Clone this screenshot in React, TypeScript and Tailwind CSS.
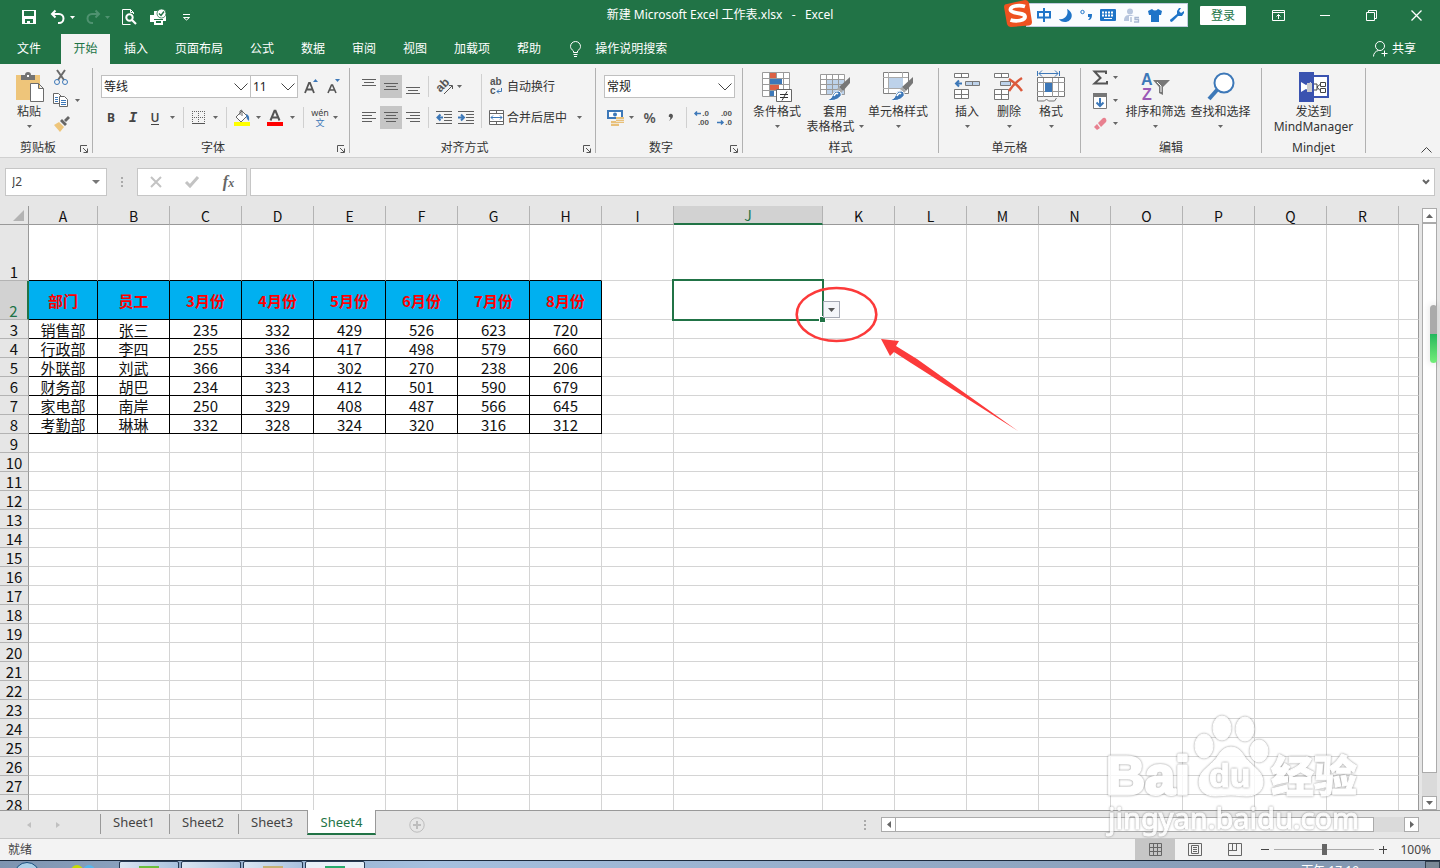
import React from "react";

const columns = [
  { name: "A", width: "w-[69px]" },
  ...["B", "C", "D", "E", "F", "G", "H", "I"].map((name) => ({ name, width: "w-[72px]" })),
  { name: "J", width: "w-[149px]" },
  ...["K", "L", "M", "N", "O", "P", "Q", "R"].map((name) => ({ name, width: "w-[72px]" })),
  { name: "", width: "" },
];

const sheetRows: string[][] = [
  [],
  ["部门", "员工", "3月份", "4月份", "5月份", "6月份", "7月份", "8月份"],
  ["销售部", "张三", "235", "332", "429", "526", "623", "720"],
  ["行政部", "李四", "255", "336", "417", "498", "579", "660"],
  ["外联部", "刘武", "366", "334", "302", "270", "238", "206"],
  ["财务部", "胡巴", "234", "323", "412", "501", "590", "679"],
  ["家电部", "南岸", "250", "329", "408", "487", "566", "645"],
  ["考勤部", "琳琳", "332", "328", "324", "320", "316", "312"],
];

const rowNumbers = Array.from({ length: 28 }, (_, i) => i + 1);

type IconProps = { children: React.ReactNode; w?: number; h?: number; className?: string };

function Svg({ children, w = 16, h = 16, className }: IconProps) {
  return (
    <svg
      width={w}
      height={h}
      viewBox={`0 0 ${w} ${h}`}
      fill="none"
      className={`shrink-0 overflow-visible ${className ?? ""}`}
      aria-hidden="true"
    >
      {children}
    </svg>
  );
}

function Caret({ className = "text-[#666]" }: { className?: string }) {
  return (
    <Svg w={5} h={3} className={className}>
      <path d="M0 0h5L2.5 3z" fill="currentColor" />
    </Svg>
  );
}

function CaretButton({ label, className }: { label: string; className: string }) {
  return (
    <button aria-label={label} className={`flex h-[23px] shrink-0 items-center justify-center ${className}`}>
      <Caret />
    </button>
  );
}

function IconButton({
  label,
  className = "w-[22px]",
  children,
}: {
  label: string;
  className?: string;
  children: React.ReactNode;
}) {
  return (
    <button aria-label={label} className={`flex h-[23px] shrink-0 items-center justify-center ${className}`}>
      {children}
    </button>
  );
}

function Separator({ className }: { className: string }) {
  return <span className={`w-px shrink-0 bg-[#d0d0d0] ${className}`} />;
}

function Lines({ rows }: { rows: [number, number, number][] }) {
  return (
    <Svg w={14} h={14}>
      {rows.map(([x, y, w]) => (
        <rect key={y} x={x} y={y} width={w} height={1} fill="#5f5f5f" />
      ))}
    </Svg>
  );
}

function Group({
  title,
  launcher,
  className,
  children,
}: {
  title: string;
  launcher?: boolean;
  className: string;
  children: React.ReactNode;
}) {
  return (
    <section className={`my-1 flex h-[85px] shrink-0 flex-col border-r border-[#b1b1b1] ${className}`}>
      <div className="flex h-[72px] shrink-0">{children}</div>
      <div className="flex h-[13px] items-center leading-4">
        <h2 className="flex-1 pt-[2px] text-center">{title}</h2>
        {launcher && (
          <button aria-label={`${title}设置`} className="ml-1 flex w-3 pt-1">
            <Svg w={8} h={8}>
              <path d="M.5 7V.5H7M3 3l4 4M7.5 3.500v4h-4" stroke="#555" />
            </Svg>
          </button>
        )}
      </div>
    </section>
  );
}

function BigButton({
  icon,
  label,
  second,
  caret = true,
  className,
}: {
  icon: React.ReactNode;
  label: string;
  second?: string;
  caret?: boolean;
  className: string;
}) {
  return (
    <button
      className={`flex shrink-0 flex-col items-center self-start whitespace-nowrap pt-[2px] leading-[15px] ${className}`}
    >
      <span className="flex h-[34px] items-center justify-center">{icon}</span>
      <span>{label}</span>
      <span className="flex h-[15px] items-center justify-center gap-1">
        {second}
        {caret && <Caret />}
      </span>
    </button>
  );
}

function TitleBar() {
  return (
    <header className="grid h-[34px] shrink-0 grid-cols-[1fr_auto_1fr] items-center text-white">
      <div className="flex items-center pl-[22px]">
        <button aria-label="保存">
          <Svg w={14} h={14}>
            <path d="M0 0h14v14H0z" fill="#fff" />
            <path d="M2 1h10v5H2zM3 9h8v4H8v-2H5v2H3z" fill="#217346" />
          </Svg>
        </button>
        <button aria-label="撤消" className="ml-[14px]">
          <Svg w={16} h={16}>
            <path d="M5.500 1.500L2 5l3.500 3.500M2.500 5H9a4.500 4.500 0 0 1 0 9H8" stroke="#fff" strokeWidth="2" />
          </Svg>
        </button>
        <span className="ml-1">
          <Caret className="text-white" />
        </span>
        <button aria-label="恢复" className="ml-[10px] text-[#4f9270]">
          <Svg w={16} h={16}>
            <path d="M10.500 1.500L14 5l-3.500 3.500M13.500 5H7a4.500 4.500 0 0 0 0 9h1" stroke="currentColor" strokeWidth="2" />
          </Svg>
        </button>
        <span className="ml-1">
          <Caret className="text-[#4f9270]" />
        </span>
        <button aria-label="打印预览" className="ml-[12px]">
          <Svg w={15} h={16}>
            <path d="M11.500 5V3.500L8.500.5h-8v15h8M8.500.5v3h3" stroke="#fff" />
            <circle cx="7.500" cy="8.500" r="3.200" stroke="#fff" strokeWidth="2" />
            <path d="M10 11l4 4" stroke="#fff" strokeWidth="2.200" />
          </Svg>
        </button>
        <button aria-label="快速打印" className="ml-[13px]">
          <Svg w={17} h={16}>
            <path d="M0 6h4V2h4v4h8v6h-3v-2H4v3H0zM4 11h9v5H4z" fill="#fff" />
            <path d="M6 12h5v2H6z" fill="#217346" />
            <circle cx="11.500" cy="4.500" r="4.500" fill="#fff" stroke="#217346" strokeWidth=".8" />
            <path d="M9 4.500l2 2 3-4" stroke="#217346" strokeWidth="1.400" />
          </Svg>
        </button>
        <button aria-label="自定义快速访问工具栏" className="ml-[15px]">
          <Svg w={9} h={7}>
            <path d="M1 .5h7M1.500 3.500h6L4.500 6z" stroke="#fff" />
          </Svg>
        </button>
      </div>
      <h1 className="whitespace-pre pb-1">新建 Microsoft Excel 工作表.xlsx   -   Excel</h1>
      <div className="flex items-center justify-end pb-[3px]">
        <button className="h-[19px] w-[46px] rounded-[1px] bg-white leading-[18px] text-[#217346]">登录</button>
        <button aria-label="功能区显示选项" className="ml-[26px]">
          <Svg w={13} h={11}>
            <path d="M.5.5h12v10H.5zM1 2.500h11M6.500 9V4.500M4.500 6.500l2-2 2 2" stroke="#fff" />
          </Svg>
        </button>
        <button aria-label="最小化" className="ml-[35px]">
          <Svg w={10} h={11}>
            <path d="M0 5.500h10" stroke="#fff" />
          </Svg>
        </button>
        <button aria-label="还原" className="ml-[36px]">
          <Svg w={11} h={11}>
            <path d="M.5 2.500h8v8h-8zM2.500 2.500v-2h8v8h-2" stroke="#fff" />
          </Svg>
        </button>
        <button aria-label="关闭" className="ml-[34px] mr-[18px]">
          <Svg w={11} h={11}>
            <path d="M.5.5l10 10M10.500.5l-10 10" stroke="#fff" strokeWidth="1.300" />
          </Svg>
        </button>
      </div>
    </header>
  );
}

function InputMethodBar() {
  return (
    <div className="absolute right-[252px] top-[3px] flex h-[24px] w-[162px] items-center gap-2 border border-[#c0cce0] bg-[#fafcff] pl-[10px] text-[#1f74c8]">
      <div className="absolute -left-[23px] -top-[4px]">
        <Svg w={28} h={28}>
          <path d="M3 4L21 0q3 0 4 3l3 19q0 3-3 3.500L7 27q-3 0-4-3L0 7q0-3 3-3z" fill="#ee5220" />
          <path
            d="M21 6.500C15 4.500 6 6 6.500 10c.5 4 14 2 14.500 6.500.5 4-9 5.500-14.500 3.500"
            stroke="#fff"
            strokeWidth="3.800"
          />
        </Svg>
      </div>
      <Svg w={14} h={14}>
        <path d="M1 4h12v5.500H1zM7 0v14" stroke="currentColor" strokeWidth="2" />
      </Svg>
      <Svg w={13} h={13}>
        <path d="M8 0c8 4 5 13-2 13-3 0-5-1-6-3 6 1 10-4 8-10z" fill="currentColor" />
      </Svg>
      <Svg w={12} h={12}>
        <circle cx="2.500" cy="3" r="1.700" stroke="currentColor" />
        <path d="M8 5h4c0 4-1 6-4 6 1-1 2-2 1.500-3H8z" fill="currentColor" />
      </Svg>
      <Svg w={16} h={12}>
        <rect width="16" height="12" rx="1" fill="currentColor" />
        <path d="M2 3.500h12M2 6.500h12" stroke="#fff" strokeWidth="2" strokeDasharray="2 1" />
        <path d="M4 9.500h8" stroke="#fff" />
      </Svg>
      <Svg w={16} h={15}>
        <circle cx="6" cy="3.500" r="3" fill="#b8c6de" />
        <path d="M0 13c0-5 2-6 6-6s6 2 6 6z" fill="#b8c6de" />
        <path d="M5 8h11v7H5z" fill="#fafcff" />
        <path d="M7 9v5M15 9.500h-4v2h3.500v2.500H10" stroke="#a9b8d3" strokeWidth="1.300" />
      </Svg>
      <Svg w={14} h={13}>
        <path d="M4 0q3 3 6 0l4 2-1 4h-2v7H3V6H1L0 2z" fill="currentColor" />
      </Svg>
      <Svg w={14} h={14}>
        <path d="M9 0L7 3v3l-6 5q-2 1 0 3 1 0 2-1l5-5h4l2-3V3l-3 2-2-2 2-3z" fill="currentColor" />
      </Svg>
    </div>
  );
}

function RibbonTabs() {
  return (
    <nav className="flex h-[30px] shrink-0 items-stretch text-white">
      <button className="w-[61px] pr-[3px] leading-[26px]">文件</button>
      <button className="w-[49px] bg-[#f3f3f3] leading-[26px] text-[#217346]">开始</button>
      {["插入", "页面布局", "公式", "数据", "审阅", "视图", "加载项", "帮助"].map((tab) => (
        <button key={tab} className="ml-px px-[13px] leading-[26px]">
          {tab}
        </button>
      ))}
      <button className="ml-4 flex items-center gap-[14px]">
        <Svg w={11} h={16}>
          <path d="M3.500 11.500V10C1.500 8.500.5 7 .5 5.500a5 5 0 0 1 10 0C10.500 7 9.500 8.500 7.500 10v1.500zM3.500 13.500h4M4 15.500h3" stroke="#fff" />
        </Svg>
        操作说明搜索
      </button>
      <button className="ml-auto mr-6 flex items-center gap-1">
        <Svg w={15} h={16}>
          <circle cx="7" cy="5" r="4.500" stroke="#fff" />
          <path d="M.5 15.500c0-3 2-5.500 5-6M8.500 12.500h6M11.500 9.500v6" stroke="#fff" />
        </Svg>
        共享
      </button>
    </nav>
  );
}

function Combo({ label, value, className }: { label: string; value: string; className: string }) {
  return (
    <div className={`relative h-[23px] shrink-0 ${className}`}>
      <select
        aria-label={label}
        defaultValue={value}
        className="h-full w-full appearance-none border border-[#c0c0c0] bg-white pl-[2px] text-xs text-[#222]"
      >
        <option>{value}</option>
      </select>
      <Svg w={14} h={8} className="pointer-events-none absolute right-[3px] top-2">
        <path d="M.5.5L7 7l6.500-6.500" stroke="#444" />
      </Svg>
    </div>
  );
}

function ClipboardGroup() {
  return (
    <Group title="剪贴板" launcher className="w-[93px]">
      <BigButton
        label="粘贴"
        className="ml-2 w-[42px]"
        icon={
          <Svg w={28} h={30} className="ml-[2px]">
            <path d="M0 3h24v25H0z" fill="#eec57a" />
            <path d="M5 8V3h4q0-3 3-3t3 3h4v5z" fill="#737373" />
            <path d="M11 3h2v2h-2z" fill="#fff" />
            <path d="M14.500 11.500h8l5 5v13h-13zM22.500 11.500v5h5" fill="#fff" stroke="#6c6c6c" />
          </Svg>
        }
      />
      <div className="-mt-[2px] flex flex-col pl-[2px]">
        <IconButton label="剪切" className="w-[18px]">
          <Svg>
            <path d="M4 0l7 10M12 0L5 10" stroke="#6a6a6a" strokeWidth="2" />
            <circle cx="4" cy="12" r="2.500" stroke="#3d78b8" />
            <circle cx="12" cy="12" r="2.500" stroke="#3d78b8" />
          </Svg>
        </IconButton>
        <div className="flex">
          <IconButton label="复制" className="w-[18px]">
            <Svg>
              <path d="M.5.5h5l3 3v7h-8z" fill="#fff" stroke="#666" />
              <path d="M2 4.500h3M2 6.500h3M2 8.500h3" stroke="#3d78b8" />
              <path d="M6.500 3.500h5l3 3v7h-8z" fill="#fff" stroke="#666" />
              <path d="M8 7.500h5M8 9.500h5M8 11.500h5" stroke="#3d78b8" />
            </Svg>
          </IconButton>
          <CaretButton label="复制选项" className="ml-[2px] w-[10px]" />
        </div>
        <IconButton label="格式刷" className="w-[20px]">
          <Svg>
            <path d="M0 9l5-3 5 5-4 5z" fill="#eec57a" />
            <path d="M6 5l2-2 5 5-2 2zM10 4l4-4 2 2-4 4z" fill="#666" />
          </Svg>
        </IconButton>
      </div>
    </Group>
  );
}

function FontGroup() {
  return (
    <Group title="字体" launcher className="w-[257px]">
      <div className="flex flex-col gap-2 pl-[7px] pt-[7px]">
        <div className="flex items-center pl-px">
          <Combo label="字体" value="等线" className="w-[150px]" />
          <Combo label="字号" value="11" className="-ml-px w-[48px]" />
          <IconButton label="增大字号" className="w-[26px]">
            <Svg w={14} h={16}>
              <path d="M1 14L5 4h1l4 10M2.500 10.500h6" stroke="#555" strokeWidth="1.800" />
              <path d="M9 3h5l-2.500-3z" fill="#3d78b8" />
            </Svg>
          </IconButton>
          <IconButton label="减小字号" className="w-[20px]">
            <Svg w={14} h={16}>
              <path d="M1 14l3.500-8h1L9 14M2.500 11h5" stroke="#555" strokeWidth="1.600" />
              <path d="M8 0h5l-2.500 3z" fill="#3d78b8" />
            </Svg>
          </IconButton>
        </div>
        <div className="flex items-center text-[#444]">
          <IconButton label="加粗">
            <b>B</b>
          </IconButton>
          <IconButton label="倾斜">
            <i className="font-['Liberation_Mono',monospace] text-sm font-bold">I</i>
          </IconButton>
          <IconButton label="下划线">
            <span className="border-b border-[#444] font-semibold leading-[13px]">U</span>
          </IconButton>
          <CaretButton label="下划线选项" className="w-3" />
          <Separator className="mx-[5px] h-[21px]" />
          <IconButton label="边框" className="w-[18px]">
            <Svg w={13} h={13}>
              <path d="M.5 0v12M6.500 0v12M12.500 0v12M0 .5h13M0 6.500h13" stroke="#666" strokeDasharray="1 1" />
              <path d="M0 12.500h13" stroke="#555" />
            </Svg>
          </IconButton>
          <CaretButton label="边框选项" className="w-4" />
          <Separator className="mx-[3px] h-[21px]" />
          <IconButton label="填充颜色" className="w-6">
            <Svg>
              <path d="M2 7l6-6 5 5-6 6z" fill="#fff" stroke="#666" />
              <path d="M6 5V1q2-2 2 0v5" stroke="#666" />
              <path d="M12 4q4 1 3 7-3-2-3-7z" fill="#3d78b8" />
              <path d="M0 12h16v4H0z" fill="#ff0" />
            </Svg>
          </IconButton>
          <CaretButton label="填充颜色选项" className="w-2" />
          <IconButton label="字体颜色" className="w-[26px]">
            <Svg>
              <path d="M3.500 10.500L7.500.8h1l4 9.700M5 7.500h6" stroke="#555" strokeWidth="2" />
              <path d="M0 12h16v4H0z" fill="red" />
            </Svg>
          </IconButton>
          <CaretButton label="字体颜色选项" className="w-2" />
          <Separator className="ml-[7px] mr-[5px] h-[21px]" />
          <button aria-label="拼音指南" className="flex w-[22px] flex-col items-center text-[9px] leading-[10px]">
            <span>wén</span>
            <span className="text-[#3d78b8]">文</span>
          </button>
          <CaretButton label="拼音选项" className="w-2" />
        </div>
      </div>
    </Group>
  );
}

function AlignmentGroup() {
  return (
    <Group title="对齐方式" launcher className="w-[246px]">
      <div className="flex flex-col gap-2 pl-2 pt-[7px]">
        <div className="flex items-center">
          <IconButton label="顶端对齐">
            <Lines rows={[[0, -1, 14], [2, 2, 10], [0, 5, 14]]} />
          </IconButton>
          <IconButton label="垂直居中" className="w-[22px] bg-[#c6c6c6]">
            <Lines rows={[[0, 3, 14], [2, 6, 10], [0, 9, 14]]} />
          </IconButton>
          <IconButton label="底端对齐">
            <Lines rows={[[0, 7, 14], [2, 10, 10], [0, 13, 14]]} />
          </IconButton>
          <Separator className="mx-1 h-[21px]" />
          <IconButton label="方向" className="w-[26px]">
            <Svg w={18} h={18}>
              <text
                x="0"
                y="11"
                transform="rotate(-45 6 9)"
                fontSize="12"
                fontWeight="700"
                fontFamily="Liberation Sans, sans-serif"
                fill="#555"
              >
                ab
              </text>
              <path d="M7 16l8-8M12 7.500h3.500V11" stroke="#555" />
            </Svg>
          </IconButton>
          <CaretButton label="方向选项" className="-ml-1 w-2" />
        </div>
        <div className="flex items-center">
          <IconButton label="左对齐">
            <Lines rows={[[0, 1, 14], [0, 4, 10], [0, 7, 14], [0, 10, 10]]} />
          </IconButton>
          <IconButton label="居中" className="w-[22px] bg-[#c6c6c6]">
            <Lines rows={[[0, 1, 14], [2, 4, 10], [0, 7, 14], [2, 10, 10]]} />
          </IconButton>
          <IconButton label="右对齐">
            <Lines rows={[[0, 1, 14], [4, 4, 10], [0, 7, 14], [4, 10, 10]]} />
          </IconButton>
          <Separator className="mx-1 h-[21px]" />
          <IconButton label="减少缩进量">
            <Svg>
              <path d="M0 1.500h16M8 4.500h8M8 7.500h8M8 10.500h8M0 13.500h16" stroke="#5f5f5f" />
              <path d="M7 7.500H2M4.500 4.500l-3 3 3 3" stroke="#3d78b8" strokeWidth="2" />
            </Svg>
          </IconButton>
          <IconButton label="增加缩进量">
            <Svg>
              <path d="M0 1.500h16M8 4.500h8M8 7.500h8M8 10.500h8M0 13.500h16" stroke="#5f5f5f" />
              <path d="M0 7.500h5M3 4.500l3 3-3 3" stroke="#3d78b8" strokeWidth="2" />
            </Svg>
          </IconButton>
        </div>
      </div>
      <Separator className="ml-[4px] mt-[6px] h-[54px]" />
      <div className="flex flex-col gap-2 pl-[7px] pt-[7px]">
        <button className="flex h-[23px] items-center gap-[3px]">
          <Svg w={15} h={17}>
            <text x="1" y="7" fontSize="10" fontWeight="700" fontFamily="Liberation Sans, sans-serif" fill="#555">
              ab
            </text>
            <text x="1" y="16" fontSize="10" fontWeight="700" fontFamily="Liberation Sans, sans-serif" fill="#555">
              c
            </text>
            <path d="M12.500 10v3.500H8M10 11.500l-2 2 2 2" stroke="#3d78b8" />
          </Svg>
          自动换行
        </button>
        <div className="flex items-center">
          <button className="flex h-[23px] items-center gap-[3px]">
            <Svg w={15} h={15}>
              <path d="M.5.5h14v14H.5zM1 3.500h13M1 11.500h13M7.500 1v3M7.500 11v3" fill="#fff" stroke="#666" />
              <path d="M2 7.500h11M4 5.500l-2 2 2 2M11 5.500l2 2-2 2" stroke="#3d78b8" />
            </Svg>
            合并后居中
          </button>
          <CaretButton label="合并选项" className="ml-2 w-2" />
        </div>
      </div>
    </Group>
  );
}

function NumberGroup() {
  return (
    <Group title="数字" launcher className="w-[147px]">
      <div className="flex flex-col gap-2 pl-2 pt-[7px]">
        <Combo label="数字格式" value="常规" className="w-[131px]" />
        <div className="flex items-center text-[#555]">
          <IconButton label="会计数字格式">
            <Svg w={17} h={16}>
              <path d="M0 0h16v9H0z" fill="#3d78b8" />
              <path d="M2 2h12v5H2z" fill="#fff" />
              <circle cx="8" cy="4.500" r="2" fill="#3d78b8" />
              <path d="M9 7h8v6h-5v3H4v-5h5z" fill="#e8c07a" />
              <path d="M9 9.500h8M4 13.500h8M9 11.500h8" stroke="#f3f3f3" strokeWidth=".7" />
            </Svg>
          </IconButton>
          <CaretButton label="会计格式选项" className="w-[10px]" />
          <IconButton label="百分比样式" className="w-[27px]">
            <span className="text-sm font-semibold">%</span>
          </IconButton>
          <IconButton label="千位分隔样式" className="w-4">
            <Svg w={6} h={10}>
              <path d="M1 2q1-2 3-1 3 3-3 7 2-3 1-4-2 0-1-2z" fill="#555" />
            </Svg>
          </IconButton>
          <Separator className="mx-[7px] h-[21px]" />
          <button
            aria-label="增加小数位数"
            className="relative w-[15px] text-right font-['Liberation_Sans',sans-serif] text-[8px] font-bold leading-[9px]"
          >
            .0
            <br />
            .00
            <Svg w={6} h={5} className="absolute left-0 top-[2px]">
              <path d="M7 2.500H1M3 .5l-2 2 2 2" stroke="#3d78b8" strokeWidth="1.500" />
            </Svg>
          </button>
          <button
            aria-label="减少小数位数"
            className="relative ml-2 w-[15px] text-right font-['Liberation_Sans',sans-serif] text-[8px] font-bold leading-[9px]"
          >
            .00
            <br />
            .0
            <Svg w={6} h={5} className="absolute bottom-[2px] left-0">
              <path d="M0 2.500h6M4 .5l2 2-2 2" stroke="#3d78b8" strokeWidth="1.500" />
            </Svg>
          </button>
        </div>
      </div>
    </Group>
  );
}

function Brush() {
  return (
    <>
      <path d="M30 5v6l-7 8-4-4z" fill="#777" />
      <path d="M19 15l4 4-2 2-4-4z" fill="#aaa" />
      <path d="M7 28q5-1 6-6 2-4 6-3 4 3 1 6-5 5-13 3z" fill="#3d78b8" stroke="#fff" />
      <path d="M14 24q2-4 4-2" stroke="#fff" strokeWidth="1.500" />
    </>
  );
}

function StyleGroup() {
  return (
    <Group title="样式" className="w-[196px]">
      <BigButton
        label="条件格式"
        className="ml-[5px] w-[58px]"
        icon={
          <Svg w={30} h={30}>
            <path d="M.5.500h27v24H.5z" fill="#fff" />
            <path d="M.5.500h27v24H.5zM0 6.500h28M0 12.500h28M0 18.500h28M7.500 0v24M14.500 0v24M21.500 0v24" stroke="#9a9a9a" />
            <path d="M8 1h6v5H8zM8 13h9v5H8z" fill="#dc6044" />
            <path d="M8 7h12v5H8zM8 19h4v5H8z" fill="#3d78b8" />
            <path d="M14.500 17.500h15v12h-15z" fill="#fff" stroke="#666" />
            <path d="M18 22.500h8M18 25.500h8M25 19.500l-5 9" stroke="#333" />
          </Svg>
        }
      />
      <BigButton
        label="套用"
        second="表格格式"
        className="w-[58px]"
        icon={
          <Svg w={30} h={30}>
            <path d="M.5 2.500h24v20H.5z" fill="#fff" />
            <path d="M7 8h18v15H7z" fill="#bdd2ea" />
            <path d="M.5 2.500h24v20H.5zM0 7.500h24M0 12.500h24M0 17.500h24M6.500 2v20M12.500 2v20M18.500 2v20" stroke="#9a9a9a" />
            <Brush />
          </Svg>
        }
      />
      <BigButton
        label="单元格样式"
        className="w-[68px]"
        icon={
          <Svg w={30} h={30}>
            <path d="M.5.500h25v21H.5z" fill="#fff" stroke="#808080" />
            <path d="M0 5.500h25M0 16.500h25M5.500 0v21M19.500 0v21" stroke="#aaa" />
            <path d="M6 6h14v10H6z" fill="#bdd2ea" />
            <Brush />
          </Svg>
        }
      />
    </Group>
  );
}

function CellsGroup() {
  return (
    <Group title="单元格" className="w-[142px]">
      <BigButton
        label="插入"
        className="ml-[7px] w-[42px]"
        icon={
          <Svg w={27} h={30}>
            <path d="M.5 1.500h14v4H.5zM7.500 1v5M.5 17.500h14v9H.5zM0 22.500h15M7.500 17v10" fill="#fff" stroke="#777" />
            <path d="M11.500 9.500h14v4h-14z" fill="#bdd2ea" stroke="#777" />
            <path d="M18.500 9v5" stroke="#777" />
            <path d="M8 11.500H2M5 8.500l-3 3 3 3" stroke="#3d78b8" strokeWidth="2" />
          </Svg>
        }
      />
      <BigButton
        label="删除"
        className="w-[42px]"
        icon={
          <Svg w={30} h={30}>
            <path d="M.5 1.500h14v4H.5zM7.500 1v5M.5 17.500h14v10H.5zM0 22.500h15M7.500 17v11" fill="#fff" stroke="#777" />
            <path d="M6.500 9.500h10v4h-10z" fill="#bdd2ea" stroke="#777" />
            <path d="M15 7q8 5 13 12M28 6Q20 11 15 19" stroke="#dc5a3c" strokeWidth="2.500" />
          </Svg>
        }
      />
      <BigButton
        label="格式"
        className="w-[42px]"
        icon={
          <Svg w={28} h={32}>
            <path d="M.5 0v5M22.500 0v5M2 2.500h19M5-.5l-3 3 3 3M18-.5l3 3-3 3" stroke="#3d78b8" />
            <path d="M.5 6.500h27v19H.5z" fill="#fff" stroke="#777" />
            <path d="M0 11.500h28M0 20.500h28M6.500 7v19M15.500 7v19M21.500 7v19" stroke="#9a9a9a" />
            <path d="M8 12h7v9H8z" fill="#3d78b8" />
            <path d="M.5 26v4h7l2-2 2 2h6l2-3" stroke="#777" />
          </Svg>
        }
      />
    </Group>
  );
}

function EditGroup() {
  return (
    <Group title="编辑" className="w-[181px]">
      <div className="-mt-[2px] flex w-[42px] shrink-0 flex-col pl-[10px]">
        <div className="flex">
          <IconButton label="自动求和" className="w-[18px]">
            <Svg>
              <path d="M14 4V1.500H2.500L8.500 8l-6 5.500H15V11" stroke="#555" strokeWidth="2" />
            </Svg>
          </IconButton>
          <CaretButton label="求和选项" className="w-3" />
        </div>
        <div className="flex">
          <IconButton label="填充" className="w-[18px]">
            <Svg w={14} h={16}>
              <path d="M.5.500h13v15H.5z" fill="#fff" stroke="#777" />
              <path d="M0 0h14v4H0z" fill="#777" />
              <path d="M7 5v8M3.500 9.500L7 13l3.500-3.500" stroke="#3d78b8" strokeWidth="2" />
            </Svg>
          </IconButton>
          <CaretButton label="填充选项" className="w-3" />
        </div>
        <div className="flex">
          <IconButton label="清除" className="w-[18px]">
            <Svg w={14} h={14}>
              <path d="M5 6l5-5q2-1 3 1t0 3L8 10z" fill="#e8808f" />
              <path d="M4 7l3 4-3 2-3-3z" fill="#e8808f" />
            </Svg>
          </IconButton>
          <CaretButton label="清除选项" className="w-3" />
        </div>
      </div>
      <BigButton
        label="排序和筛选"
        className="w-[65px]"
        icon={
          <Svg w={29} h={30}>
            <text x="0" y="13" fontSize="16" fontWeight="700" fontFamily="Liberation Sans, sans-serif" fill="#3d78b8">
              A
            </text>
            <text x="1" y="28" fontSize="16" fontWeight="700" fontFamily="Liberation Sans, sans-serif" fill="#9b59b6">
              Z
            </text>
            <path d="M12 8h17l-7 7v8l-4-2v-6z" fill="#777" />
            <path d="M16 10l4 4v6" stroke="#fff" />
          </Svg>
        }
      />
      <BigButton
        label="查找和选择"
        className="w-[65px]"
        icon={
          <Svg w={28} h={30}>
            <path d="M10 18l-8 9" stroke="#3d78b8" strokeWidth="4" />
            <circle cx="17" cy="11" r="9.500" fill="#fff" stroke="#3d78b8" strokeWidth="2" />
          </Svg>
        }
      />
    </Group>
  );
}

function MindjetGroup() {
  return (
    <Group title="Mindjet" className="w-[104px]">
      <BigButton
        label="发送到"
        second="MindManager"
        caret={false}
        className="w-full"
        icon={
          <Svg w={30} h={30}>
            <path d="M14 4h15v21H14z" fill="#fff" stroke="#3a53b0" strokeWidth="2" />
            <path d="M0 0h15v30H0z" fill="#3a53b0" />
            <path d="M2 10l5 3 5-3v10l-5-3-5 3z" fill="#fff" />
            <path d="M8 11h5v9H8z" fill="#ccc" />
            <path d="M15 12h3v6h-3M21.500 10.500h5v4h-5zM21.500 16.500h5v4h-5zM18 15l3-2.500M18 15l3 3.500" stroke="#444" />
          </Svg>
        }
      />
    </Group>
  );
}

function Ribbon() {
  return (
    <div className="flex h-[94px] shrink-0 border-b border-[#d0d0d0] bg-[#f3f3f3]">
      <ClipboardGroup />
      <FontGroup />
      <AlignmentGroup />
      <NumberGroup />
      <StyleGroup />
      <CellsGroup />
      <EditGroup />
      <MindjetGroup />
      <button aria-label="折叠功能区" className="mb-1 ml-auto mr-2 self-end">
        <Svg w={11} h={6}>
          <path d="M.5 5.500l5-5 5 5" stroke="#444" />
        </Svg>
      </button>
    </div>
  );
}

function Dots() {
  return (
    <Svg w={2} h={10}>
      <path d="M0 0h2v2H0zM0 4h2v2H0zM0 8h2v2H0z" fill="#aaa" />
    </Svg>
  );
}

function FormulaBar() {
  return (
    <div className="flex h-[48px] shrink-0 items-start pl-[5px] pr-[5px] pt-[10px]">
      <div className="flex h-[28px] w-[102px] items-center border border-[#c6c6c6] bg-white">
        <input aria-label="名称框" defaultValue="J2" className="min-w-0 flex-1 pl-[6px] text-[#444]" />
        <button aria-label="名称列表" className="px-[6px]">
          <Svg w={8} h={4}>
            <path d="M0 0h8L4 4z" fill="#777" />
          </Svg>
        </button>
      </div>
      <div className="flex h-[28px] w-[30px] items-center justify-center">
        <Dots />
      </div>
      <div className="flex h-[28px] w-[110px] items-center justify-around border border-[#c6c6c6] bg-white">
        <button aria-label="取消">
          <Svg w={12} h={12}>
            <path d="M1 1l10 10M11 1L1 11" stroke="#c3c3c3" strokeWidth="2" />
          </Svg>
        </button>
        <button aria-label="输入">
          <Svg w={14} h={12}>
            <path d="M1 6l4 4 8-9" stroke="#c3c3c3" strokeWidth="3" />
          </Svg>
        </button>
        <button
          aria-label="插入函数"
          className="font-['Liberation_Serif',serif] text-base font-bold italic leading-5 text-[#666]"
        >
          f<span className="text-xs">x</span>
        </button>
      </div>
      <div className="ml-[3px] flex h-[28px] flex-1 items-center border border-[#c6c6c6] bg-white">
        <input aria-label="编辑栏" className="min-w-0 flex-1 px-2" />
        <button aria-label="展开编辑栏" className="pr-1">
          <Svg w={8} h={6}>
            <path d="M1 1l3 3 3-3" stroke="#666" strokeWidth="2" />
          </Svg>
        </button>
      </div>
    </div>
  );
}

function Selection() {
  return (
    <>
      <span className="absolute -inset-[2px] border-2 border-[#217346]" />
      <span className="absolute -bottom-[4px] -right-[4px] size-[7px] border border-white bg-[#217346]" />
      <button
        aria-label="下拉列表"
        className="absolute left-full top-5 ml-px flex size-[17px] items-center justify-center border border-[#a6aab5] bg-[#f4f6fa]"
      >
        <Svg w={7} h={4}>
          <path d="M0 0h7L3.500 4z" fill="#555" />
        </Svg>
      </button>
      <svg
        width="350"
        height="156"
        viewBox="0 0 350 156"
        className="pointer-events-none absolute left-0 top-0 max-w-none overflow-visible"
        aria-hidden="true"
      >
        <ellipse cx="162.500" cy="33.500" rx="39.800" ry="26.500" fill="none" stroke="#fc3a3a" strokeWidth="2.600" />
        <path d="M207 58l18 2-3 5 21 13 101 72-107-68-17-11-4 4z" fill="#fc3a3a" />
      </svg>
    </>
  );
}

function cellStyle(row: number, col: number) {
  const inTable = row >= 2 && row <= 8 && col < 8;
  if (row === 2 && inTable) return "border-black bg-[#00b0f0] font-bold text-[#ff0000]";
  if (inTable) return "border-black";
  if (row === 1 && col < 8) return "border-r-[#d4d4d4] border-b-black";
  if (col === columns.length - 1) return "border-b-[#d4d4d4] border-r-[#999]";
  return "border-[#d4d4d4]";
}

function Grid() {
  return (
    <div className="min-w-0 flex-1 overflow-hidden">
      <table className="w-full table-fixed border-separate border-spacing-0 font-['Noto_Sans_CJK_SC',sans-serif] text-[15px] leading-[16px] text-[#111]">
        <colgroup>
          <col className="w-[29px]" />
          {columns.map((col) => (
            <col key={col.name} className={col.width} />
          ))}
        </colgroup>
        <thead>
          <tr className="h-[19px]">
            <th aria-label="全选" className="border-b border-r border-[#999] p-0">
              <Svg w={11} h={11} className="ml-auto mr-1">
                <path d="M11 0v11H0z" fill="#b3b3b3" />
              </Svg>
            </th>
            {columns.map((col) => (
              <th
                key={col.name}
                scope="col"
                className={
                  col.name === "J"
                    ? "border-b-2 border-r border-b-[#217346] border-r-[#b3b3b3] bg-[#d2d2d2] p-0 pt-px text-sm font-normal leading-[16px] text-[#217346]"
                    : col.name === ""
                      ? "border-b border-[#999] p-0"
                      : "border-b border-r border-b-[#999] border-r-[#b3b3b3] p-0 pt-[2px] text-sm font-normal leading-[16px]"
                }
              >
                {col.name}
              </th>
            ))}
          </tr>
        </thead>
        <tbody className="bg-white">
          {rowNumbers.map((row) => (
            <tr key={row} className={row === 1 ? "h-[56px]" : row === 2 ? "h-[39px]" : "h-[19px]"}>
              <th
                scope="row"
                className={
                  row === 2
                    ? "border-b border-r-2 border-b-[#b3b3b3] border-r-[#217346] bg-[#d2d2d2] p-0 align-bottom font-normal text-[#217346]"
                    : "border-b border-r border-b-[#b3b3b3] border-r-[#999] bg-[#e6e6e6] p-0 align-bottom font-normal"
                }
              >
                {row}
              </th>
              {columns.map((col, c) => (
                <td
                  key={col.name}
                  className={`border-b border-r p-0 pt-[2px] text-center ${cellStyle(row, c)} ${
                    row === 2 && col.name === "J" ? "relative z-10" : ""
                  }`}
                >
                  {row === 2 && col.name === "J" ? <Selection /> : sheetRows[row - 1]?.[c]}
                </td>
              ))}
            </tr>
          ))}
        </tbody>
      </table>
    </div>
  );
}

function VerticalScrollbar() {
  return (
    <div className="relative flex w-[21px] shrink-0 flex-col items-center pt-[2px]">
      <button aria-label="向上滚动" className="flex h-[15px] w-[15px] items-center justify-center border border-[#ababab] bg-white">
        <Svg w={7} h={4}>
          <path d="M0 4h7L3.500 0z" fill="#666" />
        </Svg>
      </button>
      <div className="flex w-[15px] flex-1 flex-col bg-[#dadada]">
        <div className="h-[96%] border border-[#ababab] bg-white" />
      </div>
      <button aria-label="向下滚动" className="flex h-[14px] w-[15px] items-center justify-center border border-[#ababab] bg-white">
        <Svg w={7} h={4}>
          <path d="M0 0h7L3.500 4z" fill="#666" />
        </Svg>
      </button>
      <div className="absolute right-[3px] top-[99px] flex h-[58px] w-[7px] flex-col overflow-hidden rounded-full shadow-[0_0_6px_2px_rgba(0,0,0,0.08)]">
        <span className="h-1/2 bg-[#aaa]" />
        <span className="h-1/2 bg-linear-to-b from-[#1fb85d] to-[#71ee79]" />
      </div>
    </div>
  );
}

function SheetBar() {
  return (
    <div className="flex h-[28px] shrink-0 border-t border-[#999]">
      <div className="flex w-[100px] items-center gap-[25px] pl-[27px] text-[#c0c0c0]">
        <button aria-label="上一个工作表">
          <Svg w={4} h={6}>
            <path d="M4 0v6L0 3z" fill="currentColor" />
          </Svg>
        </button>
        <button aria-label="下一个工作表">
          <Svg w={4} h={6}>
            <path d="M0 0v6l4-3z" fill="currentColor" />
          </Svg>
        </button>
      </div>
      {["Sheet1", "Sheet2", "Sheet3"].map((sheet) => (
        <button
          key={sheet}
          className="mt-[3px] h-[20px] w-[69px] border-l border-[#999] pb-1 pr-[2px] text-[13px] leading-4 text-[#444]"
        >
          {sheet}
        </button>
      ))}
      <button className="-mt-px h-[25px] w-[69px] border-x border-b-2 border-x-[#999] border-b-[#217346] bg-white text-[13px] leading-5 text-[#217346]">
        Sheet4
      </button>
      <button aria-label="新工作表" className="ml-[33px]">
        <Svg>
          <circle cx="8" cy="8" r="7.200" stroke="#bdbdbd" />
          <path d="M4 8h8M8 4v8" stroke="#bdbdbd" strokeWidth="2" />
        </Svg>
      </button>
      <div className="ml-auto flex w-[555px] items-center">
        <Dots />
        <button aria-label="向左滚动" className="ml-[15px] flex size-[15px] items-center justify-center border border-[#ababab] bg-white">
          <Svg w={4} h={7}>
            <path d="M4 0v7L0 3.500z" fill="#666" />
          </Svg>
        </button>
        <div className="h-[15px] flex-1 bg-[#dadada]">
          <div className="h-full w-[94%] border-y border-r border-[#ababab] bg-white" />
        </div>
        <button aria-label="向右滚动" className="flex size-[15px] items-center justify-center border border-[#ababab] bg-white">
          <Svg w={4} h={7}>
            <path d="M0 0v7l4-3.500z" fill="#666" />
          </Svg>
        </button>
      </div>
      <div className="w-[21px] shrink-0" />
    </div>
  );
}

function StatusBar() {
  return (
    <footer className="flex h-[22px] shrink-0 items-center border-t border-[#c6c6c6] bg-[#f3f3f3] text-[#444]">
      <span className="pl-2">就绪</span>
      <div className="ml-auto flex h-full items-center">
        <button aria-label="普通" className="flex h-full w-10 items-center justify-center bg-[#c6c6c6]">
          <Svg w={13} h={13}>
            <path d="M.5.500h12v12H.5zM0 4.500h13M0 8.500h13M4.500 0v13M8.500 0v13" stroke="#666" />
          </Svg>
        </button>
        <button aria-label="页面布局" className="flex h-full w-10 items-center justify-center">
          <Svg w={14} h={13}>
            <path d="M.5.500h13v12H.5zM3.500 2.500h7v8h-7zM5 4.500h4M5 6.500h4M5 8.500h4" stroke="#666" />
          </Svg>
        </button>
        <button aria-label="分页预览" className="flex h-full w-10 items-center justify-center">
          <Svg w={14} h={13}>
            <path d="M.5.500h13v12H.5zM4.500 1v6M8.500 1v6M0 7.500h9" stroke="#666" />
          </Svg>
        </button>
        <button aria-label="缩小" className="ml-[6px]">
          <Svg w={8} h={8}>
            <path d="M0 3.500h8" stroke="#444" />
          </Svg>
        </button>
        <input
          type="range"
          aria-label="显示比例"
          defaultValue={50}
          className="ml-[5px] h-3 w-[100px] appearance-none bg-[linear-gradient(#aaa,#aaa)] bg-[length:100%_1px] bg-center bg-no-repeat [&::-webkit-slider-thumb]:h-[11px] [&::-webkit-slider-thumb]:w-[5px] [&::-webkit-slider-thumb]:appearance-none [&::-webkit-slider-thumb]:bg-[#666]"
        />
        <button aria-label="放大" className="ml-[5px]">
          <Svg w={8} h={8}>
            <path d="M0 3.500h8M4.500 0v8" stroke="#444" />
          </Svg>
        </button>
        <span className="ml-[13px] mr-[9px]">100%</span>
      </div>
    </footer>
  );
}

function Taskbar() {
  return (
    <div className="flex h-[8px] shrink-0 overflow-hidden border-t border-[#1c2a3c] bg-linear-to-r from-[#7e94b0] via-[#a5c0df] via-30% to-[#8094ad]">
      <div className="flex w-[119px] items-start pl-[14px] pt-px">
        <span className="h-[26px] w-[26px] rounded-full border border-[#174d7c] bg-[#acd0e8]" />
        <span className="ml-[31px] mt-[3px] size-3 rounded-full bg-[#c7dc00]" />
        <span className="mt-[3px] size-3 rounded-full bg-[#53b7ef]" />
      </div>
      {["bg-[#6bbf3b]", "bg-transparent", "bg-[#c6b174]", "bg-[#26ac6d]"].map((color, i) => (
        <span
          key={color}
          className={`mr-[2px] flex h-5 w-[60px] justify-center rounded-t-[2px] border border-[#263a54] pt-1 ${
            i === 3 ? "bg-[#e8f0f8]" : "bg-linear-to-r from-[#dbe6f2] to-[#a9c1dd]"
          }`}
        >
          <span className={`h-3 w-5 ${color}`} />
        </span>
      ))}
      <span className="ml-auto mr-[66px] pt-[2px] leading-[16px] text-white">下午 17:19</span>
      <span className="h-5 w-[15px] border border-[#33414f] bg-[#7a8996]" />
    </div>
  );
}

function Watermark() {
  return (
    <svg
      width="360"
      height="168"
      viewBox="0 0 360 168"
      className="pointer-events-none absolute bottom-0 right-0 z-20 opacity-80 [&>*]:[filter:drop-shadow(0_0_1px_#777)]"
      fill="#fff"
      stroke="#fff"
      strokeWidth="1"
      strokeLinejoin="round"
      aria-hidden="true"
    >
      <text x="26" y="94" fontSize="54" fontWeight="700" fontFamily="Liberation Sans, sans-serif" strokeWidth="3">
        Bai
      </text>
      <ellipse cx="124" cy="46" rx="9" ry="12" />
      <ellipse cx="142" cy="28" rx="9" ry="12" />
      <ellipse cx="165" cy="29" rx="9" ry="12" />
      <ellipse cx="179" cy="51" rx="9" ry="11" />
      <path d="M151 47q-8 0-13 9c-6 10-19 14-19 26 0 9 7 14 16 14 6 0 10-1 16-1s10 1 16 1c9 0 16-5 16-14 0-12-13-16-19-26q-5-9-13-9z" />
      <text x="129" y="87" fontSize="34" fontWeight="700" fontFamily="Liberation Sans, sans-serif">
        du
      </text>
      <text x="191" y="92" fontSize="43" fontWeight="900" fontFamily="Noto Sans CJK SC, sans-serif">
        经验
      </text>
      <text x="28" y="129" fontSize="29" fontFamily="Noto Sans, sans-serif">
        jingyan.baidu.com
      </text>
    </svg>
  );
}

export default function App() {
  return (
    <div className="relative flex h-screen flex-col overflow-hidden bg-[#e6e6e6] font-['Noto_Sans','Noto_Sans_CJK_SC',sans-serif] text-xs text-[#333]">
      <div className="shrink-0 bg-[#217346]">
        <TitleBar />
        <RibbonTabs />
      </div>
      <InputMethodBar />
      <Ribbon />
      <FormulaBar />
      <main className="flex min-h-0 flex-1">
        <Grid />
        <VerticalScrollbar />
      </main>
      <SheetBar />
      <StatusBar />
      <Taskbar />
      <Watermark />
    </div>
  );
}
